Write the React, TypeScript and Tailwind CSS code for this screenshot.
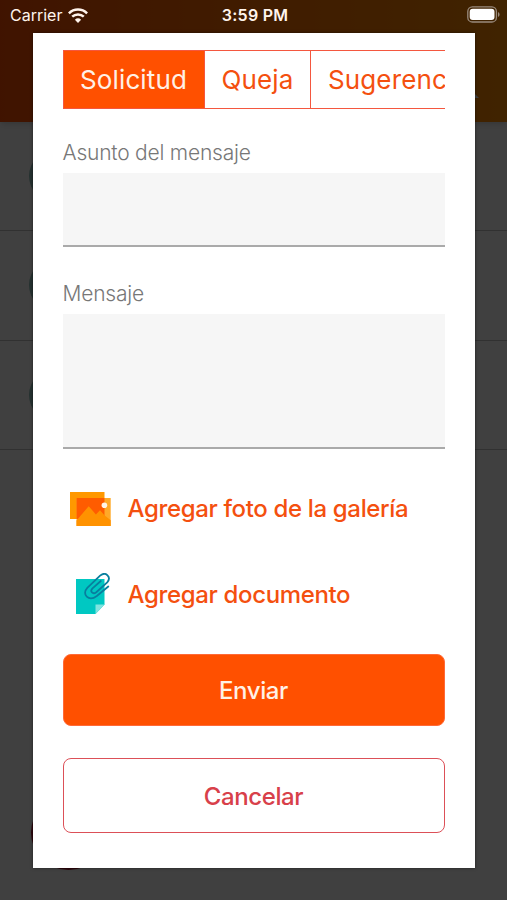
import { useState } from 'react';

const tabs = ['Solicitud', 'Queja', 'Sugerencia'];

function StatusBar() {
  return (
    <div className="absolute inset-x-0 top-0 z-20 flex h-[33px] items-center text-[#fff4ec]">
      <div className="flex flex-1 items-center gap-[6px] pl-[10px] pb-[3px]">
        <span className="text-[16px] leading-none">Carrier</span>
        <svg className="h-[15px] w-[20px]" viewBox="0 0 20 15" fill="none" stroke="currentColor">
          <path d="M0.9 5.3a13 13 0 0 1 18.2 0" strokeWidth="2.5" />
          <path d="M4.2 8.7a8.4 8.4 0 0 1 11.6 0" strokeWidth="2.5" />
          <path d="M10 15l-3.1-3.3a4.5 4.5 0 0 1 6.2 0z" fill="currentColor" stroke="none" />
        </svg>
      </div>
      <span className="pb-[3px] text-[16px] font-semibold leading-none tracking-[0.25px]">3:59 PM</span>
      <div className="flex flex-1 items-center justify-end pr-[7px] pb-[4px]">
        <svg className="h-[17px] w-[33px]" viewBox="0 0 33 17">
          <rect x="0.8" y="0.8" width="28.6" height="15.2" rx="4.6" fill="none" stroke="#998a7c" strokeWidth="1.3" />
          <rect x="2.7" y="2.7" width="24.8" height="11.4" rx="3" fill="#fff" />
          <path d="M31 6v5q1.6-.8 1.6-2.5t-1.6-2.5z" fill="#998a7c" />
        </svg>
      </div>
    </div>
  );
}

// Message list that stays dimmed behind the dialog
function Background() {
  return (
    <div className="h-full bg-white">
      <div className="flex h-[122px] items-end justify-end bg-linear-to-r from-[#ff4e00] to-[#ff8b00] pr-7 pb-[24px] shadow-md">
        <svg className="h-[5px] w-[5px]" viewBox="0 0 5 5">
          <path d="M0 0l5 5H0z" fill="#fff" />
        </svg>
      </div>
      {[0, 1, 2].map((row) => (
        <div key={row} className="flex h-[109.3px] items-center border-b border-[#c4c4c4] pl-[29px]">
          <span className="h-[54px] w-[54px] rounded-full bg-[#94c4be]" />
        </div>
      ))}
      <div className="flex h-[420px] items-end pl-[31px]">
        <span className="h-[75px] w-[75px] rounded-full bg-[#b01830]" />
      </div>
    </div>
  );
}

function PhotoIcon() {
  return (
    <svg className="h-[34px] w-[41px]" viewBox="0 0 41 34">
      <path d="M0 0h34.5v27H0z" fill="#ff9800" />
      <path d="M6.5 6h34.2v28H6.5z" fill="#ffa928" />
      <path d="M6.5 6h28v21h-28z" fill="#ff5c00" />
      <path d="M6.5 28.5L18.7 14.2l7.2 8.2 4.1-4.2 4.7 5.2 6 4.8V34H6.5z" fill="#ff9200" />
      <circle cx="34.4" cy="13.3" r="2.8" fill="#fff5e8" />
    </svg>
  );
}

function DocumentIcon() {
  return (
    <svg className="h-[41px] w-[34px]" viewBox="0 0 34 41">
      <path d="M0 6h28.5v25.5L19.5 41H0z" fill="#00c8c2" />
      <path d="M19.5 41v-9.5h9z" fill="#80e4e0" />
      <path
        d="M32.3 13.5L20.8 23c-8 6-15.6-1.6-9.5-8.2L24.1 2.6c5.7-4.6 11.6 1.5 7.1 6.7L20.3 19.2c-3.6 2.6-6.7-.7-3.8-3.8L24.8 8"
        fill="none"
        stroke="#087f9e"
        strokeWidth="1.8"
        strokeLinecap="round"
      />
    </svg>
  );
}

export default function App() {
  const [active, setActive] = useState('Solicitud');
  const [subject, setSubject] = useState('');
  const [message, setMessage] = useState('');

  return (
    <div className="relative h-[900px] w-[507px] overflow-hidden font-['Inter',sans-serif]">
      <Background />
      <div className="absolute inset-0 z-10 flex items-start justify-center bg-black/75 pt-[33px]">
        <div className="flex h-[834.5px] w-[442px] flex-col bg-white px-[30px] pt-[17px] shadow-[0_0_3px_rgba(0,0,0,0.5)]">
          <div className="h-[59px] overflow-hidden">
            <div className="flex h-full w-max border border-[#f4573f] text-[26px]">
              {tabs.map((tab) => (
                <button
                  key={tab}
                  onClick={() => setActive(tab)}
                  className={`border-r border-[#f4573f] pl-[16.5px] pr-[17px] tracking-[0.13px] ${
                    active === tab ? 'bg-[#ff5000] text-[#fff1e6]' : 'text-[#f4500f]'
                  }`}
                >
                  {tab}
                </button>
              ))}
            </div>
          </div>

          <label className="mt-[30px] text-[21px] font-light leading-[28px] tracking-[-0.22px] text-[#777]">
            <span className="block">Asunto del mensaje</span>
            <input
              value={subject}
              onChange={(e) => setSubject(e.target.value)}
              className="mt-[6px] block h-[74px] w-full border-b-2 border-[#aaa] bg-[#f6f6f6] px-3 outline-none"
            />
          </label>

          <label className="mt-[33px] text-[21px] font-light leading-[28px] tracking-[-0.22px] text-[#777]">
            <span className="block">Mensaje</span>
            <textarea
              value={message}
              onChange={(e) => setMessage(e.target.value)}
              className="mt-[6px] block h-[135px] w-full resize-none border-b-2 border-[#aaa] bg-[#f6f6f6] px-3 outline-none"
            />
          </label>

          <button className="mt-[42px] flex h-[36px] shrink-0 items-center text-left text-[24px] font-medium tracking-[-0.35px] text-[#f4500f]">
            <span className="flex w-[65px] pl-[7px]">
              <PhotoIcon />
            </span>
            <span>Agregar foto de la galería</span>
          </button>
          <button className="mt-[45px] flex h-[42px] shrink-0 items-center text-left text-[24px] font-medium tracking-[-0.35px] text-[#f4500f]">
            <span className="flex w-[65px] pl-[13px]">
              <DocumentIcon />
            </span>
            <span className="pt-[4px]">Agregar documento</span>
          </button>

          <button className="mt-[40px] h-[72px] shrink-0 rounded-lg border border-[#ff6a38] bg-[#ff5000] pt-[2px] text-[24px] font-medium tracking-[-0.4px] text-[#fff1e6]">
            Enviar
          </button>
          <button className="mt-[32px] h-[75px] shrink-0 rounded-lg border-[1.5px] border-[#dc5058] pt-[2px] text-[24px] font-medium tracking-[-0.4px] text-[#d8404a]">
            Cancelar
          </button>
        </div>
      </div>
      <StatusBar />
    </div>
  );
}
